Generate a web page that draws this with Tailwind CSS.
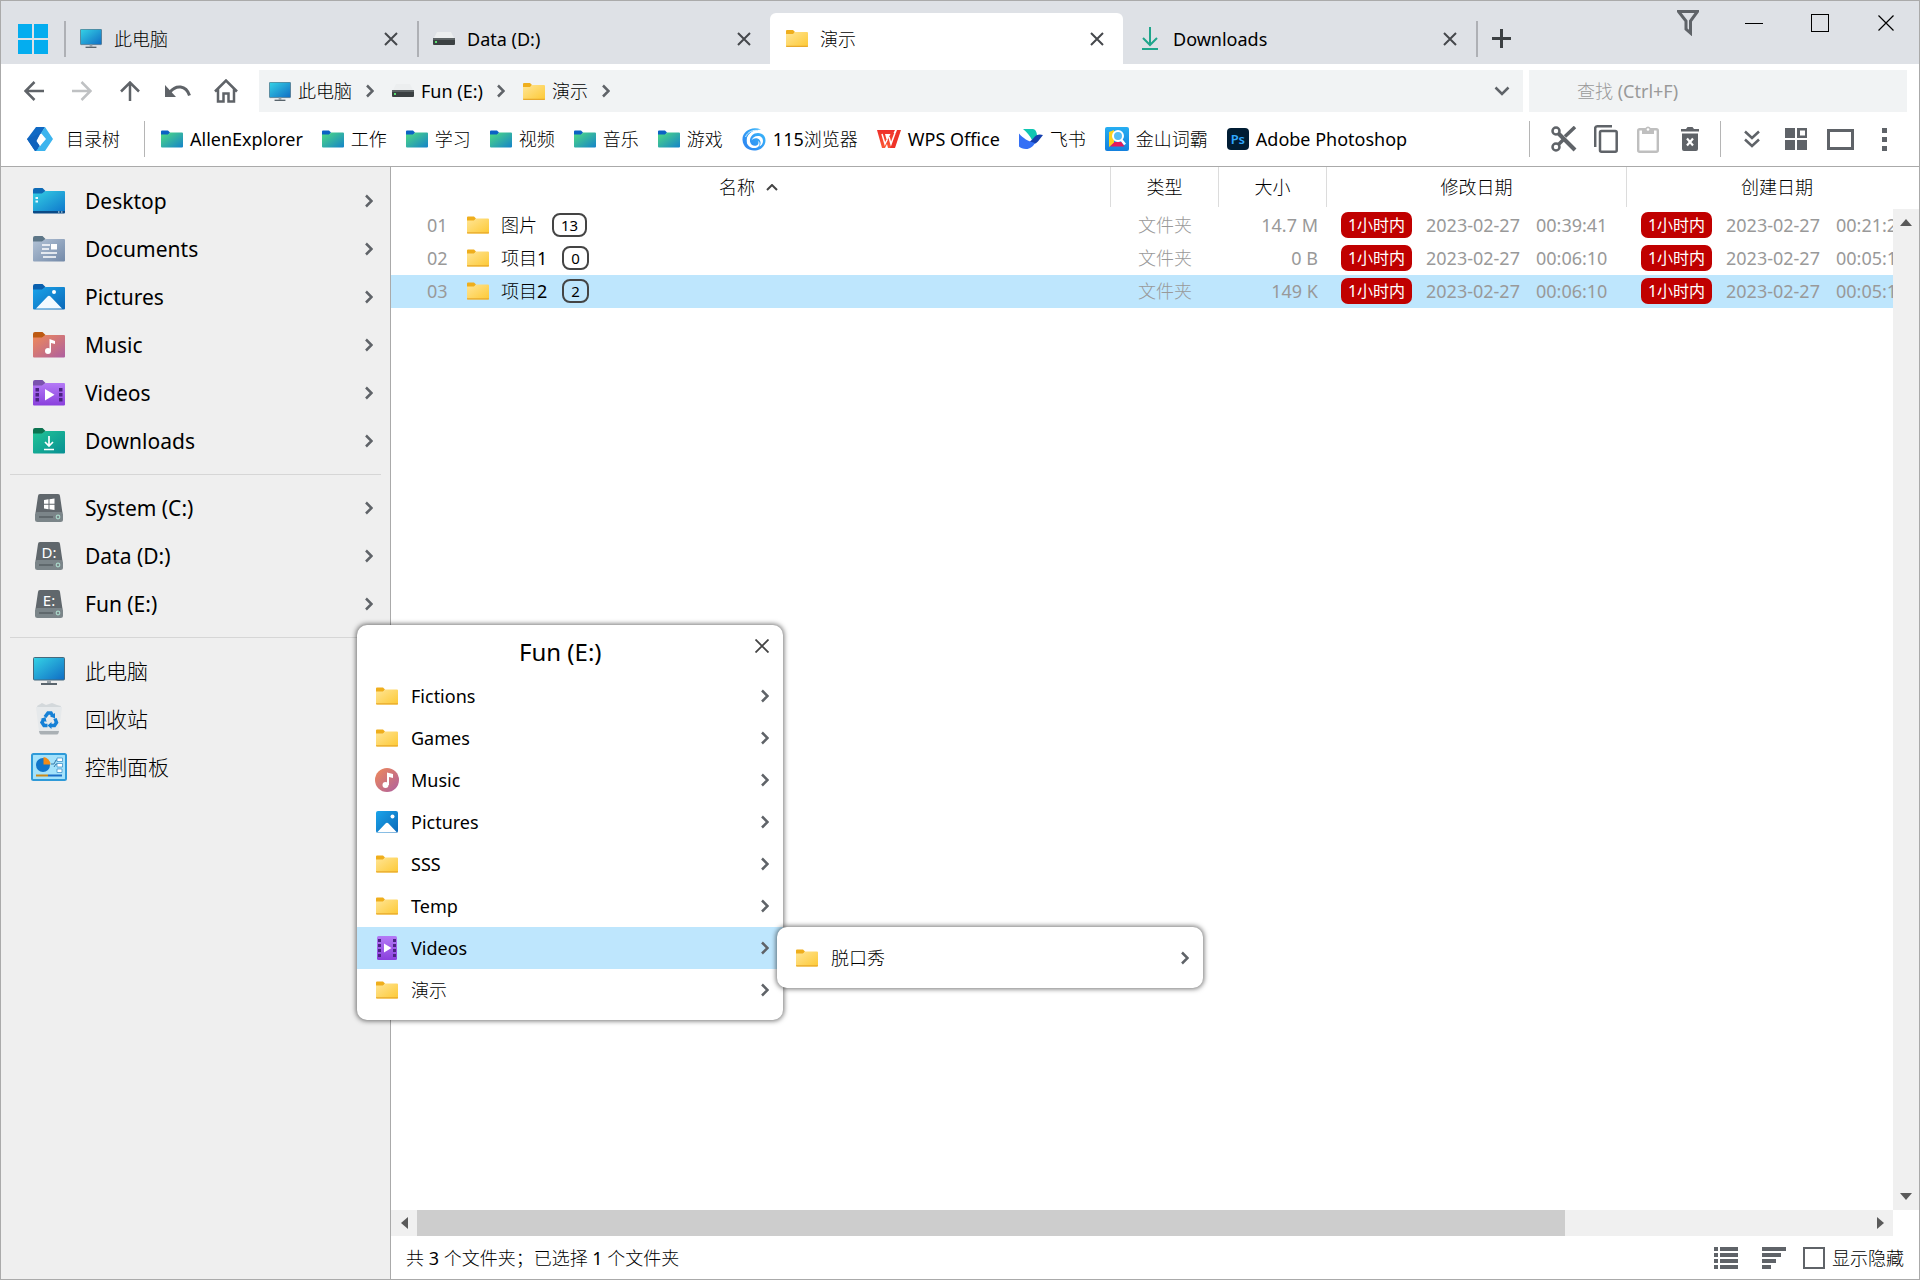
<!DOCTYPE html>
<html lang="zh-CN">
<head>
  <meta charset="UTF-8">
  <meta name="viewport" content="width=device-width,initial-scale=1.0"/>
  <title>演示</title>
  <script src="https://cdn.jsdelivr.net/npm/@tailwindcss/browser@4"></script>
</head>
<body class="h-screen overflow-hidden bg-white text-black text-[18px] leading-[24px] font-['Noto_Sans','Noto_Sans_CJK_SC_Light','Noto_Sans_CJK_SC',sans-serif]">

  <!-- ICON SPRITE -->
  <svg class="absolute size-0" aria-hidden="true">
    <defs>
      <linearGradient id="g-screen" x1="0" y1="0" x2="1" y2="1"><stop offset="0" stop-color="#35d3e6"/><stop offset="1" stop-color="#0f6cc4"/></linearGradient>
      <linearGradient id="g-yellow" x1="0" y1="0" x2="1" y2="1"><stop offset="0" stop-color="#ffe596"/><stop offset="1" stop-color="#fdc934"/></linearGradient>
      <linearGradient id="g-green" x1="0" y1="0" x2="1" y2="1"><stop offset="0" stop-color="#4fdc82"/><stop offset="1" stop-color="#1583c9"/></linearGradient>
      <linearGradient id="g-desk" x1="0" y1="0" x2="1" y2="1"><stop offset="0" stop-color="#35d0e4"/><stop offset="1" stop-color="#0f78cc"/></linearGradient>
      <linearGradient id="g-doc" x1="0" y1="0" x2="1" y2="1"><stop offset="0" stop-color="#b3c3d6"/><stop offset="1" stop-color="#7389a8"/></linearGradient>
      <linearGradient id="g-pic" x1="0" y1="0" x2="1" y2="1"><stop offset="0" stop-color="#1aa4ea"/><stop offset="1" stop-color="#0b68b8"/></linearGradient>
      <linearGradient id="g-music" x1="0" y1="0" x2="1" y2="1"><stop offset="0" stop-color="#f08a58"/><stop offset="1" stop-color="#ad5fa0"/></linearGradient>
      <linearGradient id="g-video" x1="0" y1="0" x2="0" y2="1"><stop offset="0" stop-color="#b47af6"/><stop offset="1" stop-color="#8a40dd"/></linearGradient>
      <linearGradient id="g-down" x1="0" y1="0" x2="1" y2="1"><stop offset="0" stop-color="#22c596"/><stop offset="1" stop-color="#078f93"/></linearGradient>
      <linearGradient id="g-115" x1="1" y1="0" x2="0" y2="1"><stop offset="0" stop-color="#3bbcfb"/><stop offset="1" stop-color="#2b7ff0"/></linearGradient>
      <linearGradient id="g-dict" x1="0" y1="0" x2="0" y2="1"><stop offset="0" stop-color="#26aef2"/><stop offset="1" stop-color="#1480dd"/></linearGradient>
      <linearGradient id="g-wps" x1="0" y1="0" x2="0" y2="1"><stop offset="0" stop-color="#ee2f2a"/><stop offset="1" stop-color="#fb5a35"/></linearGradient>
    </defs>

    <symbol id="i-pc" viewBox="0 0 32 28"><rect x=".5" y=".5" width="31" height="22.5" rx="1" fill="url(#g-screen)" stroke="#47697c"/><path d="M14 23h4v3h-4z" fill="#98a3aa"/><path d="M8 26h16v2H8z" fill="#59646c"/></symbol>
    <symbol id="i-drive" viewBox="0 0 22 16"><path d="M4 1h14l3 6H1z" fill="#eceeef"/><rect x="0" y="7" width="22" height="7" rx="1" fill="#3b4042"/><path d="M0 7h22v2H0z" fill="#5d6365"/><rect x="2" y="10" width="2" height="2" fill="#5be071"/></symbol>
    <symbol id="i-folder" viewBox="0 0 22 17"><path d="M0 1a1 1 0 0 1 1-1h6l2 2-2 3H0z" fill="#efae1c"/><path d="M0 4h7l2-2h12a1 1 0 0 1 1 1v13a1 1 0 0 1-1 1H1a1 1 0 0 1-1-1z" fill="url(#g-yellow)"/><path d="M0 15.8h22v.3a.9.9 0 0 1-1 .9H1a.9.9 0 0 1-1-.9z" fill="#e8a92c"/></symbol>
    <symbol id="i-gfolder" viewBox="0 0 22 17"><path d="M0 1a1 1 0 0 1 1-1h6l2 2-2 3H0z" fill="#0b62c4"/><path d="M0 4h7l2-2h12a1 1 0 0 1 1 1v13a1 1 0 0 1-1 1H1a1 1 0 0 1-1-1z" fill="url(#g-green)"/></symbol>

    <symbol id="i-desktop" viewBox="0 0 32 26"><path d="M0 2a2 2 0 0 1 2-2h7.500l3 3-4 4H0z" fill="#0d6ab6"/><path d="M0 5.500h9L12.500 3H31a1 1 0 0 1 1 1v19.500H0z" fill="url(#g-desk)"/><path d="M0 23h32v1.500a1 1 0 0 1-1 1H1a1 1 0 0 1-1-1z" fill="#0b4a86"/><path d="M2.500 9h2.500v2H2.500zM2.500 12.500h2.500v2H2.500zM25 23.500h1.500v1H25zM28 23.500h1.500v1H28z" fill="#e8fbff"/></symbol>
    <symbol id="i-documents" viewBox="0 0 32 26"><path d="M0 2a2 2 0 0 1 2-2h7.500l3 3-4 4H0z" fill="#5d7687"/><path d="M0 5.500h9L12.500 3H31a1 1 0 0 1 1 1v20.500a1 1 0 0 1-1 1H1a1 1 0 0 1-1-1z" fill="url(#g-doc)"/><path d="M9 9h8M9 13h7M8 17h16M10 21h13" stroke="#fff" stroke-width="1.600"/><path d="M18 8h6v5.500h-6z" fill="#fff"/></symbol>
    <symbol id="i-pictures" viewBox="0 0 32 26"><path d="M0 2a2 2 0 0 1 2-2h7.500l3 3-4 4H0z" fill="#0a60ae"/><path d="M0 5.500h9L12.500 3H31a1 1 0 0 1 1 1v20.500a1 1 0 0 1-1 1H1a1 1 0 0 1-1-1z" fill="url(#g-pic)"/><path d="M3 24.500L14.500 12.500a2 2 0 0 1 3 0L29 24.500z" fill="#f3faff"/><circle cx="21" cy="8" r="2" fill="#fff"/></symbol>
    <symbol id="i-music" viewBox="0 0 32 26"><path d="M0 2a2 2 0 0 1 2-2h7.500l3 3-4 4H0z" fill="#bd5a12"/><path d="M0 5.500h9L12.500 3H31a1 1 0 0 1 1 1v20.500a1 1 0 0 1-1 1H1a1 1 0 0 1-1-1z" fill="url(#g-music)"/><path d="M16.500 19V7l5.500 2v3l-4-1v8z" fill="#fff"/><circle cx="15" cy="19" r="3" fill="#fff"/></symbol>
    <symbol id="i-videos" viewBox="0 0 32 26"><path d="M0 2a2 2 0 0 1 2-2h7.500l3 3-4 4H0z" fill="#7a52ae"/><path d="M0 5.500h9L12.500 3H31a1 1 0 0 1 1 1v20.500a1 1 0 0 1-1 1H1a1 1 0 0 1-1-1z" fill="url(#g-video)"/><path d="M2.500 8H6v3.500H2.500zM2.500 13H6v3.500H2.500zM2.500 18H6v3.500H2.500zM26 8h3.500v3.500H26zM26 13h3.500v3.500H26zM26 18h3.500v3.500H26z" fill="#4b2383"/><path d="M12 9l9.500 5.700-9.500 5.800z" fill="#fff"/></symbol>
    <symbol id="i-downloads" viewBox="0 0 32 26"><path d="M0 2a2 2 0 0 1 2-2h7.500l3 3-4 4H0z" fill="#0b7350"/><path d="M0 5.500h9L12.500 3H31a1 1 0 0 1 1 1v20.500a1 1 0 0 1-1 1H1a1 1 0 0 1-1-1z" fill="url(#g-down)"/><path d="M16 8v10M12 14l4 4 4-4M11 21.500h10" fill="none" stroke="#fff" stroke-width="1.700"/></symbol>

    <symbol id="i-disk" viewBox="0 0 28 28"><path d="M5 0h18a2 2 0 0 1 2 2l2.500 17H.5L3 2a2 2 0 0 1 2-2z" fill="#60676c"/><rect y="18" width="28" height="10" rx="2.500" fill="#7b8589"/><path d="M4 22h14v2H4z" fill="#5f686c"/><circle cx="23" cy="23" r="1.800" fill="none" stroke="#a9d6c8" stroke-width="1.200"/></symbol>
    <symbol id="i-winmark" viewBox="0 0 28 28"><path d="M9 6l4.500-.7v4.500H9zM14.500 5.200L19.500 4.500v5.300h-5zM9 10.800h4.500v4.400L9 14.500zM14.500 10.800h5V16l-5-.7z" fill="#fff"/></symbol>
    <symbol id="i-recycle" viewBox="0 0 28 32"><path d="M2 3l5-3 4 2 6-2 5 2 4 1-1 3H3z" fill="#d3d8db"/><path d="M1 4h26l-3 25a2 2 0 0 1-2 2H6a2 2 0 0 1-2-2z" fill="#e6e9eb"/><path d="M4 28h20l-.5 2a2 2 0 0 1-2 1.500h-15a2 2 0 0 1-2-1.500z" fill="#aab0b4"/><g fill="none" stroke="#1580d6" stroke-width="3.500"><path d="M10 14l3-4h3l2 3.500"/><path d="M20 15.500l1.500 4-2 3H16"/><path d="M12.500 22.500H9l-2-3 2-3.500"/></g><path d="M20 10v5.500l-5-2.200zM16.500 19v7l-4-3.500zM5.500 16l5-2 1 5z" fill="#1580d6"/></symbol>
    <symbol id="i-control" viewBox="0 0 36 28"><rect x="1" y="1" width="34" height="26" rx="1.500" fill="#a4e2fb" stroke="#2f9ad8" stroke-width="2"/><circle cx="12" cy="12" r="7" fill="#1275c9"/><path d="M12.500 4a8 8 0 0 1 7 7.500h-7z" fill="#f58b14"/><path d="M20 11h3l2-4h2M27 11h-2l-2 3" fill="none" stroke="#3579a8" stroke-width="1"/><path d="M26 5h5.500v3.500H26zM26 10.500h5.500V14H26zM26 16h5v3.500h-5z" fill="#fff" stroke="#2f86c4" stroke-width=".7"/><path d="M5 22.500h12" stroke="#c98a1a" stroke-width="2"/><path d="M17 22.500h14" stroke="#1c6fc7" stroke-width="2"/></symbol>
    <symbol id="i-musicapp" viewBox="0 0 24 24"><circle cx="12" cy="12" r="12" fill="url(#g-music)"/><path d="M12 17V4.500l6 1.500v4l-4-1v8z" fill="#fff"/><circle cx="10.500" cy="17" r="3" fill="#fff"/></symbol>
    <symbol id="i-picapp" viewBox="0 0 24 24"><rect x="1" y="1" width="22" height="22" rx="2" fill="url(#g-pic)"/><path d="M2 22.500l8.500-9a2 2 0 0 1 3 0l8.500 9z" fill="#fff"/><circle cx="17.500" cy="6.500" r="2" fill="#fff"/></symbol>
    <symbol id="i-vidapp" viewBox="0 0 24 24"><rect x="2" y="0" width="20" height="24" rx="1.500" fill="url(#g-video)"/><path d="M3 3h3v3H3zM3 8h3v3H3zM3 13h3v3H3zM3 18h3v3H3zM18 3h3v3h-3zM18 8h3v3h-3zM18 13h3v3h-3zM18 18h3v3h-3z" fill="#4b2383"/><path d="M9 7.500l7.500 4.500L9 16.500z" fill="#fff"/></symbol>

    <symbol id="i-tree" viewBox="0 0 28 26"><path d="M10 1h9L15 8 9 14l5 11H9L1 13z" fill="#1069c4"/><path d="M19 1l8 12-8 12h-9l4-5 6-7-5-6z" fill="#3cb4ee"/><path d="M15 7l-4 8 3 5-5 5L1 13z" fill="#1063bd"/><path d="M14.500 7.500l3.500 6-4 6.500-3.500-5z" fill="#fff"/></symbol>
    <symbol id="i-115" viewBox="0 0 24 24"><path d="M19 2.500C9-1.500 0 5 .5 13 1 20 6.500 23.500 12 23.500c7 0 11.500-5 11.500-10C23.500 8.500 20 6 16 6c-5 0-8.500 4-8 8.500.5 3.500 4 5 6.500 4 2-.8 2.500-3 1.500-4.500 3 1.500 1.500 6.500-2.500 7C8 21.600 4.500 18 4.500 13.500 4.500 7 11 2.500 19 2.500z" fill="url(#g-115)"/><path d="M4.500 14C4.500 9 7 6 10 4.500 5 6 2.500 10 3 15c.5 3 2.500 5.500 5 6.500-2-1.500-3.500-4-3.500-7.500z" fill="url(#g-115)"/><path d="M9.500 13.500c2-3 6.500-2.800 8.300-.3 1.500 2.300.8 4.800-.8 6.300 2.500-.8 4-3 4-5.500 0-3-2-5-5-5-3.200 0-5.800 2-6.500 4.500z" fill="#fff"/><path d="M3.500 10C5.500 5 11 2.500 16 3.500" fill="none" stroke="#d8effe" stroke-width="1"/></symbol>
    <symbol id="i-wps" viewBox="0 0 24 20"><path d="M0 1h18l-2 4H8l2 7 4-8h5l-4 15h-4l-1-4-2 4H5z" fill="url(#g-wps)"/><path d="M20 1h4l-6 18h-5z" fill="#ee3328"/><path d="M5 5l3 10 2-4M12 8l2 7 4-11" fill="none" stroke="#fff" stroke-width="1.500"/></symbol>
    <symbol id="i-feishu" viewBox="0 0 24 20"><path d="M4 0h10a3 3 0 0 1 2.500 1.500C17.500 3 18 5 18 7l-5 4C11 7 8 3 4 0z" fill="#10c6b2"/><path d="M24 6c-4-1.500-7 0-9 2.500-3 3.500-5 5-8 6 6 2 11 .5 13.500-4z" fill="#153fae"/><path d="M0 4.500c4 4.500 9 8 16 9.500-2 3.500-5 6-9 6-3 0-5.500-1-7-2.500z" fill="#3470f5"/></symbol>
    <symbol id="i-dict" viewBox="0 0 24 24"><rect width="24" height="24" rx="2" fill="url(#g-dict)"/><path d="M4 5l5-2v13l-5 4z" fill="#ffd21e"/><path d="M5 19.500l4.500-4.500h7l3 4.500z" fill="#e4185c"/><circle cx="13" cy="9" r="5" fill="#56bdf4" stroke="#fff" stroke-width="2"/><path d="M16.500 13l3.500 4.500" stroke="#fff" stroke-width="2.500"/></symbol>

    <symbol id="i-right" viewBox="0 0 8 14"><path d="M1 1.500L6.500 7 1 12.500" fill="none" stroke="currentColor" stroke-width="2.500"/></symbol>
    <symbol id="i-x" viewBox="0 0 14 14"><path d="M1 1l12 12M13 1L1 13" stroke="currentColor" stroke-width="2"/></symbol>
    <symbol id="i-xthin" viewBox="0 0 16 16"><path d="M.5.5l15 15M15.500.5l-15 15" stroke="currentColor" stroke-width="1.200"/></symbol>
  </svg>

  <div class="flex h-full flex-col border border-[#aaaaaa]">

    <!-- Title bar with tabs -->
    <header class="flex h-[63px] shrink-0 items-end bg-[#dee1e6]">
      <button class="flex h-[51px] w-[63px] items-center pl-[17px]" aria-label="Start">
        <svg class="size-[30px]" viewBox="0 0 30 30"><path d="M0 0h14v14H0zM16 0h14v14H16zM0 16h14v14H0zM16 16h14v14H16z" fill="#04adef"/></svg>
      </button>
      <nav class="flex h-[51px]">
        <div class="flex w-[353px] items-center pr-[19px]">
          <span class="h-9 w-[2px] bg-[#aeb0b5]"></span>
          <button class="flex flex-1 items-center gap-3 pl-[14px] text-left"><svg class="h-[19px] w-[22px]"><use href="#i-pc"/></svg>此电脑</button>
          <button class="text-[#45484c]" aria-label="Close"><svg class="size-[14px]"><use href="#i-x"/></svg></button>
        </div>
        <div class="flex w-[353px] items-center pr-[19px]">
          <span class="h-9 w-[2px] bg-[#aeb0b5]"></span>
          <button class="flex flex-1 items-center gap-3 pl-[14px] text-left"><svg class="h-4 w-[22px]"><use href="#i-drive"/></svg>Data (D:)</button>
          <button class="text-[#45484c]" aria-label="Close"><svg class="size-[14px]"><use href="#i-x"/></svg></button>
        </div>
        <div class="flex w-[353px] items-center rounded-t-md bg-white pr-[19px]">
          <button class="flex flex-1 items-center gap-3 pl-4 text-left"><svg class="h-[21px] w-[22px]" viewBox="0 0 22 21"><use href="#i-folder"/></svg>演示</button>
          <button class="text-[#45484c]" aria-label="Close"><svg class="size-[14px]"><use href="#i-x"/></svg></button>
        </div>
        <div class="flex w-[353px] items-center pr-[19px]">
          <button class="flex flex-1 items-center gap-3 pl-4 text-left">
            <svg class="h-[23px] w-[22px]" viewBox="0 0 22 23" fill="none" stroke="#1fa58b" stroke-width="2"><path d="M11 0v18M4 11l7 7 7-7M3 22h16"/></svg>Downloads
          </button>
          <button class="text-[#45484c]" aria-label="Close"><svg class="size-[14px]"><use href="#i-x"/></svg></button>
        </div>
        <div class="flex items-center gap-[14px]">
          <span class="h-9 w-[2px] bg-[#aeb0b5]"></span>
          <button aria-label="New tab"><svg class="size-[19px]" viewBox="0 0 19 19"><path d="M9.500 0v19M0 9.500h19" stroke="#3c4043" stroke-width="3"/></svg></button>
        </div>
      </nav>
      <div class="ml-auto flex h-11 self-start">
        <button class="flex w-[66px] items-center justify-center" aria-label="Filter"><svg class="h-[26px] w-[22px]" viewBox="0 0 22 26" fill="none" stroke="#5f6368" stroke-width="3"><path d="M1.500 1.500h19L13.500 11v12L9 19v-8z"/></svg></button>
        <button class="flex w-[66px] items-center justify-center" aria-label="Minimize"><svg class="h-px w-[18px]" viewBox="0 0 18 1"><path d="M0 0h18v1H0z"/></svg></button>
        <button class="flex w-[66px] items-center justify-center" aria-label="Maximize"><span class="size-[18px] border border-black"></span></button>
        <button class="flex w-[66px] items-center justify-center" aria-label="Close window"><svg class="size-4"><use href="#i-xthin"/></svg></button>
      </div>
    </header>

    <!-- Navigation + address bar -->
    <div class="flex shrink-0 gap-[6px] pt-[6px] pr-3 pl-[9px]">
      <div class="flex w-[243px] text-[#5f6368]">
        <button class="flex w-12 items-center justify-center" aria-label="Back"><svg class="size-5" viewBox="0 0 20 20" fill="none" stroke="currentColor" stroke-width="2.500"><path d="M20 10H2M10.500 1L1.500 10l9 9"/></svg></button>
        <button class="flex w-12 items-center justify-center text-[#bfc1c3]" aria-label="Forward"><svg class="size-5" viewBox="0 0 20 20" fill="none" stroke="currentColor" stroke-width="2.500"><path d="M0 10h18M9.500 1l9 9-9 9"/></svg></button>
        <button class="flex w-12 items-center justify-center" aria-label="Up"><svg class="size-5" viewBox="0 0 20 20" fill="none" stroke="currentColor" stroke-width="2.500"><path d="M10 20V2M1 10.500l9-9 9 9"/></svg></button>
        <button class="flex w-12 items-center justify-center" aria-label="Undo"><svg class="h-[14px] w-[26px]" viewBox="0 0 26 14"><path d="M0 1v12h11z" fill="currentColor"/><path d="M5 8C11 .5 21 1 24.500 11.500" fill="none" stroke="currentColor" stroke-width="3"/></svg></button>
        <button class="flex w-12 items-center justify-center" aria-label="Home"><svg class="size-6" viewBox="0 0 24 24" fill="none" stroke="currentColor" stroke-width="2.500"><path d="M1 12.500L12 1.500l11 11M4 10v12.500h5.500v-8h5v8H20V10"/></svg></button>
      </div>
      <div class="flex h-[42px] flex-1 items-center bg-[#f1f3f4] pr-[13px] pl-[10px]">
        <button class="flex items-center gap-[7px]"><svg class="h-[19px] w-[22px]"><use href="#i-pc"/></svg>此电脑</button>
        <svg class="mr-[18px] ml-[14px] h-[14px] w-2 text-[#5f6368]"><use href="#i-right"/></svg>
        <button class="flex items-center gap-[7px]"><svg class="h-4 w-[22px]"><use href="#i-drive"/></svg>Fun (E:)</button>
        <svg class="mr-[18px] ml-[14px] h-[14px] w-2 text-[#5f6368]"><use href="#i-right"/></svg>
        <button class="flex items-center gap-[7px]"><svg class="h-[21px] w-[22px]" viewBox="0 0 22 21"><use href="#i-folder"/></svg>演示</button>
        <svg class="mr-[18px] ml-[14px] h-[14px] w-2 text-[#5f6368]"><use href="#i-right"/></svg>
        <button class="ml-auto" aria-label="History"><svg class="h-[10px] w-4" viewBox="0 0 16 10" fill="none" stroke="#5f6368" stroke-width="2.500"><path d="M1.500 1.500L8 8l6.500-6.500"/></svg></button>
      </div>
      <input type="search" aria-label="查找" placeholder="查找 (Ctrl+F)" class="h-[42px] w-[378px] bg-[#f1f3f4] pl-12 outline-none placeholder:text-[#999999]">
    </div>

    <!-- Bookmark bar -->
    <div class="flex h-[55px] shrink-0 items-center border-b border-[#aaaaaa] pr-[13px] pl-[25px]">
      <button class="flex items-center gap-3"><svg class="h-[26px] w-7"><use href="#i-tree"/></svg>目录树</button>
      <span class="mr-4 ml-6 h-9 w-px bg-[#b5b5b5]"></span>
      <div id="bookmarks" class="flex items-center gap-[19px]"></div>
      <div class="ml-auto flex h-9 items-center text-[#5f6368]">
        <span class="mr-[13px] h-9 w-px bg-[#b5b5b5]"></span>
        <button class="flex w-[42px] justify-center" aria-label="Cut"><svg class="size-[26px]" viewBox="0 0 26 26" fill="none" stroke="currentColor"><circle cx="5" cy="5" r="3.500" stroke-width="2.500"/><circle cx="5" cy="21" r="3.500" stroke-width="2.500"/><path d="M7.500 7.500L24 24" stroke-width="4"/><path d="M7.500 18.500L13 13M14 10.500L24 1" stroke-width="3.500"/></svg></button>
        <button class="flex w-[42px] justify-center" aria-label="Copy"><svg class="h-7 w-6" viewBox="0 0 24 28" fill="none" stroke="currentColor" stroke-width="2.500"><path d="M1.200 22V3a2 2 0 0 1 2-1.700H18"/><rect x="6" y="6" width="16.700" height="20.700" rx="1.500"/></svg></button>
        <button class="flex w-[42px] justify-center text-[#bfbfbf]" aria-label="Paste"><svg class="h-7 w-6" viewBox="0 0 24 28"><rect x="2.200" y="4.200" width="19.600" height="22.600" rx="1.500" fill="none" stroke="currentColor" stroke-width="2.400"/><path d="M6 3h3.500a2.800 2.800 0 0 1 5 0H18v6H6z" fill="currentColor"/><circle cx="12" cy="4.500" r="1.300" fill="#fff"/></svg></button>
        <button class="flex w-[42px] justify-center" aria-label="Delete"><svg class="h-6 w-[18px]" viewBox="0 0 18 24"><path d="M0 2h5l1.500-2h5L13 2h5v2.500H0zM1 6.500h16V22a2 2 0 0 1-2 2H3a2 2 0 0 1-2-2z" fill="currentColor"/><path d="M6 11.500l6 7M12 11.500l-6 7" stroke="#fff" stroke-width="2.200"/></svg></button>
        <span class="mr-[9px] ml-[9px] h-9 w-px bg-[#b5b5b5]"></span>
        <button class="flex w-11 justify-center" aria-label="More bookmarks"><svg class="h-[18px] w-4" viewBox="0 0 16 18" fill="none" stroke="currentColor" stroke-width="2.500"><path d="M1 1.500L8 8l7-6.500M1 9.500L8 16l7-6.500"/></svg></button>
        <button class="flex w-11 justify-center" aria-label="Layout"><svg class="size-[22px]" viewBox="0 0 22 22" fill="currentColor"><path d="M0 0h10v10H0zM0 12h10v10H0zM12 12h10v10H12zM12 0h10v10H12zm3 2.500v5h5v-5z" fill-rule="evenodd"/></svg></button>
        <button class="flex w-11 justify-center" aria-label="Single pane"><span class="h-[21px] w-[27px] border-3 border-[#5f6368]"></span></button>
        <button class="flex w-11 justify-center" aria-label="Menu"><svg class="h-[23px] w-[5px]" viewBox="0 0 5 23" fill="currentColor"><path d="M0 0h5v5H0zM0 9h5v5H0zM0 18h5v5H0z"/></svg></button>
      </div>
    </div>

    <div class="flex min-h-0 flex-1">
      <!-- Sidebar -->
      <aside class="w-[390px] shrink-0 border-r border-[#aaaaaa] bg-[#efefef] px-[9px] pt-[10px] text-[21px] leading-[28px]">
        <div id="places"></div>
        <hr class="my-[9px] border-[#d6d6d6]">
        <div id="disks"></div>
        <hr class="my-[9px] border-[#d6d6d6]">
        <div id="system"></div>
      </aside>

      <!-- File list -->
      <main class="flex min-w-0 flex-1 flex-col">
        <div class="relative flex-1 overflow-hidden">
          <table class="w-[1536px] table-fixed">
            <thead>
              <tr class="h-[42px]">
                <th class="w-[720px] p-0 pb-[2px] font-normal"><div class="flex h-10 items-center justify-center gap-[11px] border-r border-[#dcdcdc] pr-1">名称<svg class="h-[7px] w-3" viewBox="0 0 12 7" fill="none" stroke="#444" stroke-width="2"><path d="M1 6l5-5 5 5"/></svg></div></th>
                <th class="w-[108px] p-0 pb-[2px] font-normal"><div class="flex h-10 items-center justify-center border-r border-[#dcdcdc]">类型</div></th>
                <th class="w-[108px] p-0 pb-[2px] font-normal"><div class="flex h-10 items-center justify-center border-r border-[#dcdcdc]">大小</div></th>
                <th class="w-[300px] p-0 pb-[2px] font-normal"><div class="flex h-10 items-center justify-center border-r border-[#dcdcdc]">修改日期</div></th>
                <th class="w-[300px] p-0 pb-[2px] font-normal"><div class="flex h-10 items-center justify-center">创建日期</div></th>
              </tr>
            </thead>
            <tbody id="files" class="text-[#999999]"></tbody>
          </table>
          <!-- vertical scrollbar over the clipped last column -->
          <div class="absolute top-[42px] right-0 bottom-0 flex w-[26px] flex-col items-center justify-between bg-[#f0f0f0] py-[10px]">
            <svg class="h-[7px] w-3" viewBox="0 0 12 7"><path d="M6 0l6 7H0z" fill="#5a5a5a"/></svg>
            <svg class="h-[7px] w-3" viewBox="0 0 12 7"><path d="M6 7L0 0h12z" fill="#5a5a5a"/></svg>
          </div>
        </div>
        <div class="mr-[26px] flex h-[26px] shrink-0 items-center bg-[#f0f0f0]">
          <span class="flex w-[26px] justify-center"><svg class="h-3 w-[7px]" viewBox="0 0 7 12"><path d="M0 6l7-6v12z" fill="#5a5a5a"/></svg></span>
          <div class="flex h-full flex-1"><div class="flex-[19] bg-[#cdcdcd]"></div><div class="flex-[5]"></div></div>
          <span class="flex w-[26px] justify-center"><svg class="h-3 w-[7px]" viewBox="0 0 7 12"><path d="M7 6L0 0v12z" fill="#5a5a5a"/></svg></span>
        </div>
        <footer class="flex h-[43px] shrink-0 items-center pr-[15px] pl-[15px]">
          <span>共 3 个文件夹；已选择 1 个文件夹</span>
          <button class="mr-6 ml-auto text-[#5f6368]" aria-label="Details"><svg class="h-[22px] w-6" viewBox="0 0 24 22" fill="currentColor"><path d="M0 0h4v4H0zM6 0h18v4H6zM0 6h4v4H0zM6 6h18v4H6zM0 12h4v4H0zM6 12h18v4H6zM0 18h4v4H0zM6 18h18v4H6z"/></svg></button>
          <button class="mr-[17px] text-[#5f6368]" aria-label="Sort"><svg class="h-[22px] w-6" viewBox="0 0 24 22" fill="currentColor"><path d="M0 0h24v4H0zM0 6h19v4H0zM0 12h14v4H0zM0 18h9v4H0z"/></svg></button>
          <label class="flex items-center gap-[7px]"><input type="checkbox" class="size-[22px] appearance-none border-2 border-[#5f6368]">显示隐藏</label>
        </footer>
      </main>
    </div>
  </div>

  <!-- Cascading folder menus -->
  <div class="absolute top-[625px] left-[357px] w-[426px] rounded-[10px] bg-white pb-[9px] shadow-[0_0_5px_1px_rgba(0,0,0,0.55)]">
    <div class="flex h-[50px] items-start justify-between pr-[14px] pl-[162px]">
      <h2 class="pt-[11px] text-[24px] leading-[32px]">Fun (E:)</h2>
      <button class="pt-[14px] text-[#444444]" aria-label="Close menu"><svg class="size-[14px]" viewBox="0 0 14 14"><path d="M.5.5l13 13M13.500.5l-13 13" stroke="currentColor" stroke-width="1.800"/></svg></button>
    </div>
    <div id="menu"></div>
  </div>
  <div class="absolute top-[927px] left-[777px] w-[426px] rounded-[10px] bg-white pt-[10px] pb-[9px] shadow-[0_0_5px_1px_rgba(0,0,0,0.55)]">
    <div id="submenu"></div>
  </div>

  <script>
    // ---- DATA ----
    const bookmarks = [
      ['gfolder', 'AllenExplorer'], ['gfolder', '工作'], ['gfolder', '学习'], ['gfolder', '视频'], ['gfolder', '音乐'], ['gfolder', '游戏'],
      ['115', '115浏览器'], ['wps', 'WPS Office'], ['feishu', '飞书'], ['dict', '金山词霸'], ['ps', 'Adobe Photoshop'],
    ];
    const places = [['desktop', 'Desktop'], ['documents', 'Documents'], ['pictures', 'Pictures'], ['music', 'Music'], ['videos', 'Videos'], ['downloads', 'Downloads']];
    const disks = [['', 'System (C:)'], ['D:', 'Data (D:)'], ['E:', 'Fun (E:)']];
    const system = [['pc', '此电脑', 'h-7 w-8'], ['recycle', '回收站', 'h-8 w-7'], ['control', '控制面板', 'h-7 w-9']];
    const files = [
      ['01', '图片', 13, '14.7 M', '00:39:41', '00:21:24'],
      ['02', '项目1', 0, '0 B', '00:06:10', '00:05:16'],
      ['03', '项目2', 2, '149 K', '00:06:10', '00:05:19'],
    ];
    const menu = [['folder', 'Fictions'], ['folder', 'Games'], ['musicapp', 'Music'], ['picapp', 'Pictures'], ['folder', 'SSS'], ['folder', 'Temp'], ['vidapp', 'Videos'], ['folder', '演示']];

    // ---- TEMPLATES ----
    const arrow = '<svg class="h-[14px] w-2 text-[#5f6368]"><use href="#i-right"/></svg>';

    function bookmarkIcon(name) {
      if (name === 'ps') {
        return '<span class="flex size-[22px] items-center justify-center rounded bg-[#001d34] text-[13px] leading-none font-semibold text-[#31a8ff]">Ps</span>';
      }
      const size = name === 'gfolder' ? 'h-[18px] w-[22px]' : name === 'wps' || name === 'feishu' ? 'h-5 w-6' : 'size-6';
      return `<svg class="${size}"><use href="#i-${name}"/></svg>`;
    }
    function sideRow(icon, label, hasArrow) {
      return `<button class="flex h-12 w-full items-center pr-2 pl-[14px] text-left"><span class="relative mr-[11px] flex w-[50px] justify-center">${icon}</span><span class="flex-1">${label}</span>${hasArrow ? arrow : ''}</button>`;
    }
    function diskIcon(letter) {
      const mark = letter
        ? `<span class="absolute top-0 text-[15px] leading-[20px] text-white">${letter}</span>`
        : '<svg class="absolute size-7"><use href="#i-winmark"/></svg>';
      return `<svg class="size-7"><use href="#i-disk"/></svg>${mark}`;
    }
    function dateCell(time) {
      return `<td class="p-0 pb-[2px] pl-[14px]"><div class="flex items-center whitespace-nowrap"><span class="mr-[14px] flex h-[26px] w-[71px] items-center justify-center rounded-[7px] bg-[#c00000] font-['Noto_Sans','Noto_Sans_CJK_SC',sans-serif] text-[16px] text-white">1小时内</span><span class="mr-4">2023-02-27</span><span>${time}</span></div></td>`;
    }
    function fileRow([num, name, count, size, modified, created], i) {
      return `<tr class="h-[33px] ${i === 2 ? 'bg-[#bee6fd]' : ''}">
        <td class="p-0 pb-[2px] pl-9"><div class="flex items-center"><span class="w-10">${num}</span><svg class="mr-3 h-[18px] w-[22px]"><use href="#i-folder"/></svg><span class="mr-[15px] text-black">${name}</span><span class="flex h-6 items-center rounded-lg border-2 border-[#444444] px-[7px] text-[15px] text-black">${count}</span></div></td>
        <td class="p-0 pb-[2px] text-center">文件夹</td>
        <td class="p-0 pr-[9px] pb-[2px] text-right">${size}</td>
        ${dateCell(modified)}${dateCell(created)}
      </tr>`;
    }
    function menuRow([icon, label]) {
      const size = icon === 'folder' ? 'h-[18px] w-[22px]' : 'size-6';
      return `<button class="flex h-[42px] w-full items-center pr-[14px] pl-[18px] text-left ${label === 'Videos' ? 'bg-[#bee6fd]' : ''}"><span class="mr-3 flex w-6 justify-center"><svg class="${size}"><use href="#i-${icon}"/></svg></span><span class="flex-1">${label}</span>${arrow}</button>`;
    }

    // ---- RENDER ----
    const fill = (id, html) => document.getElementById(id).innerHTML = html;
    fill('bookmarks', bookmarks.map(([icon, label]) => `<button class="flex items-center gap-[7px] whitespace-nowrap">${bookmarkIcon(icon)}${label}</button>`).join(''));
    fill('places', places.map(([icon, label]) => sideRow(`<svg class="h-[26px] w-8"><use href="#i-${icon}"/></svg>`, label, true)).join(''));
    fill('disks', disks.map(([letter, label]) => sideRow(diskIcon(letter), label, true)).join(''));
    fill('system', system.map(([icon, label, size]) => sideRow(`<svg class="${size}"><use href="#i-${icon}"/></svg>`, label, false)).join(''));
    fill('files', files.map(fileRow).join(''));
    fill('menu', menu.map(menuRow).join(''));
    fill('submenu', menuRow(['folder', '脱口秀']));
  </script>
</body>
</html>
